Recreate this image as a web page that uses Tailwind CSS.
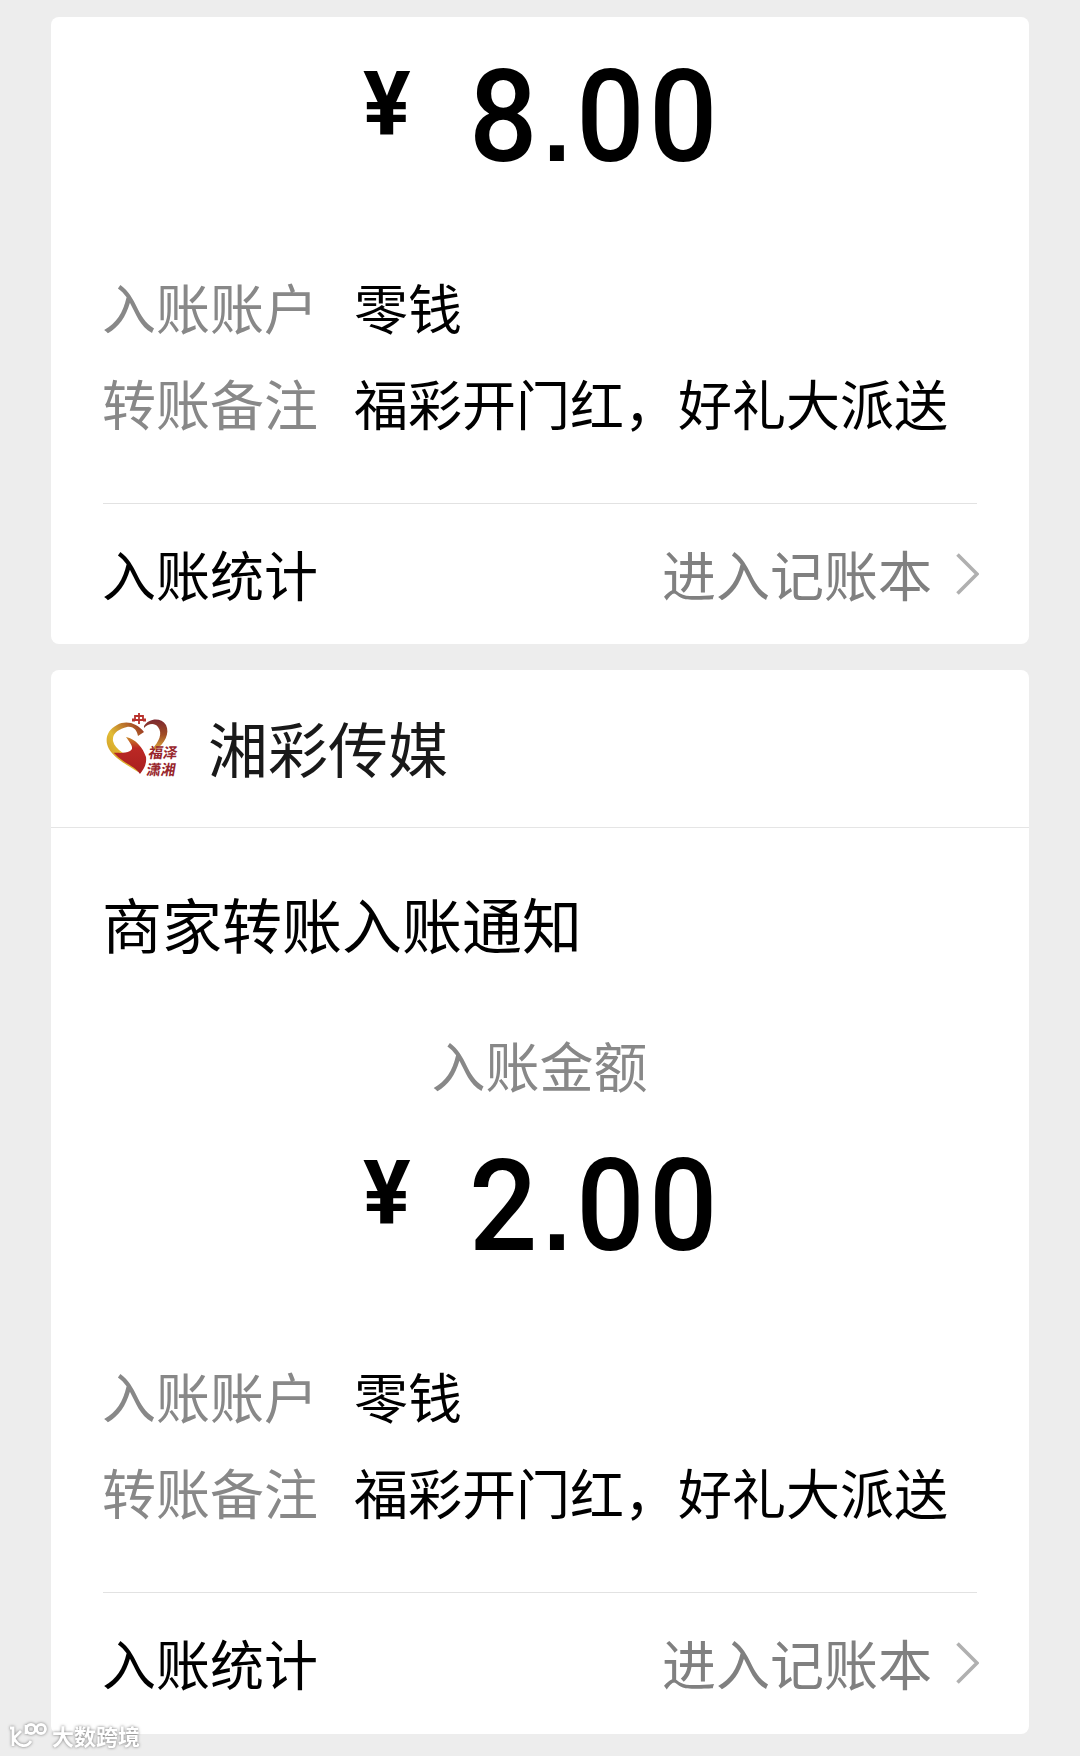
<html lang="zh-CN">
  <head>
    <meta charset="utf-8" />
    <title>入账通知</title>
    <script src="https://cdn.jsdelivr.net/npm/@tailwindcss/browser@4"></script>
  </head>

  <body
    class="relative h-[1756px] overflow-hidden bg-[#ededed] px-[51px] pt-[17px] font-['Noto_Sans_CJK_SC',sans-serif] text-[54px] text-black"
  >
    <div class="flex flex-col gap-[26px]">
      <!-- 8.00 -->
      <section class="h-[627px] w-[978px] rounded-lg bg-white px-[52px] pt-[37px]">
        <div class="flex h-[126px] pl-[260px] font-[Roboto] leading-none">
          <span class="w-[106px] origin-left pt-[5px] text-[89px] font-bold">¥</span>
          <span class="origin-left scale-x-94 text-[128px] leading-[126px] font-medium tracking-[4.7px] whitespace-nowrap"
            >8<span class="inline-block w-[36.7px] text-center font-['Liberation_Sans'] text-[105px] leading-none font-bold">.</span>00</span
          >
        </div>

        <div class="mt-[83px] h-[240px]">
          <div class="flex h-[95px] items-center pb-[8px]">
            <span class="-ml-px w-[252px] text-[#888]">入账账户</span>
            <span>零钱</span>
          </div>
          <div class="flex h-[96px] items-center pb-[8px]">
            <span class="-ml-px w-[252px] text-[#888]">转账备注</span>
            <span class="whitespace-nowrap">福彩开门红，好礼大派送</span>
          </div>
        </div>

        <div class="flex h-[141px] w-[874px] items-center border-t border-[#e2e2e2]">
          <span class="-ml-px pb-[2px]">入账统计</span>
          <span class="mr-[24px] ml-auto pb-[2px] text-[#808080]">进入记账本</span>
          <svg class="-mr-[2px] h-[42px] w-[23px]" viewBox="0 0 23 42" fill="none">
            <path d="M1.5 1.5 21 21 1.5 40.5" stroke="#b0b0b0" stroke-width="3.6" />
          </svg>
        </div>
      </section>

      <!-- 2.00 -->
      <section class="h-[1064px] w-[978px] rounded-lg bg-white">
        <header class="flex h-[158px] items-center border-b border-[#e5e5e5] px-[52px] pb-[3px]">
          <svg class="mb-[3px] h-[80px] w-[80px]" viewBox="0 0 80 80" fill="none">
            <defs>
              <linearGradient id="ring" x1="0" y1="1" x2="1" y2="0">
                <stop offset="0" stop-color="#c98a1c" />
                <stop offset=".45" stop-color="#e2bd35" />
                <stop offset="1" stop-color="#8f2320" />
              </linearGradient>
              <linearGradient id="wing" x1="0" y1="0" x2="0" y2="1">
                <stop offset="0" stop-color="#7c2830" />
                <stop offset=".5" stop-color="#a04c25" />
                <stop offset="1" stop-color="#e0ad3c" />
              </linearGradient>
              <linearGradient id="palm" x1="0" y1="0" x2="0" y2="1">
                <stop offset="0" stop-color="#c98b2a" />
                <stop offset=".3" stop-color="#bb2824" />
                <stop offset="1" stop-color="#a92020" />
              </linearGradient>
            </defs>
            <path
              d="M41 26C34 17 23 14 14 19C4 24 1 34 6 43C12 53 26 60 35 66L33 55C24 49 12 44 10 35C9 27 16 23 24 21C31 20 34 25 35 30Z"
              fill="url(#ring)"
            />
            <path
              d="M41 20C46 12 58 11 63 19C67 27 62 38 52 44L49 43C56 36 60 27 55 21C51 16 45 18 41 22Z"
              fill="url(#wing)"
            />
            <path
              d="M23 31C33 33 40 42 43 51C44 59 40 64 37 68C32 60 20 57 12 48C7 45 20 49 27 45C32 42 27 37 23 31Z"
              fill="url(#palm)"
            />
            <path d="M36 7v11M32 10h8v4h-8z" stroke="#b8322d" stroke-width="1.800" />
            <path d="M29 14h3M40 14h3" stroke="#b8322d" stroke-width="3" />
            <g fill="#98252b" font-family="Noto Sans CJK SC" font-size="14.500" font-weight="700">
              <text x="46" y="52" transform="translate(8 0) skewX(-10)">福泽</text>
              <text x="45" y="69.500" transform="translate(10 0) skewX(-10)">潇湘</text>
            </g>
          </svg>
          <span class="ml-[25px] text-[60px] text-[#191919]">湘彩传媒</span>
        </header>

        <div class="px-[52px] pt-[65px]">
          <h1 class="-ml-px text-[60px] leading-[60px]">商家转账入账通知</h1>
          <p class="mt-[85px] -ml-px text-center leading-[54px] text-[#888]">入账金额</p>

          <div class="mt-[51px] flex h-[126px] pl-[260px] font-[Roboto] leading-none">
            <span class="w-[106px] origin-left pt-[5px] text-[89px] font-bold">¥</span>
            <span class="origin-left scale-x-94 text-[128px] leading-[126px] font-medium tracking-[4.7px] whitespace-nowrap"
              >2<span class="inline-block w-[36.7px] text-center font-['Liberation_Sans'] text-[105px] leading-none font-bold">.</span>00</span
            >
          </div>

          <div class="mt-[83px] h-[240px]">
            <div class="flex h-[95px] items-center pb-[8px]">
              <span class="-ml-px w-[252px] text-[#888]">入账账户</span>
              <span>零钱</span>
            </div>
            <div class="flex h-[96px] items-center pb-[8px]">
              <span class="-ml-px w-[252px] text-[#888]">转账备注</span>
              <span class="whitespace-nowrap">福彩开门红，好礼大派送</span>
            </div>
          </div>

          <div class="flex h-[141px] w-[874px] items-center border-t border-[#e2e2e2]">
            <span class="-ml-px pb-[2px]">入账统计</span>
            <span class="mr-[24px] ml-auto pb-[2px] text-[#808080]">进入记账本</span>
            <svg class="-mr-[2px] h-[42px] w-[23px]" viewBox="0 0 23 42" fill="none">
              <path d="M1.5 1.5 21 21 1.5 40.5" stroke="#b0b0b0" stroke-width="3.6" />
            </svg>
          </div>
        </div>
      </section>
    </div>

    <!-- watermark -->
    <div
      class="absolute bottom-[7px] left-[8px] flex items-center gap-[5px] text-[22px] leading-[28px] font-bold text-white drop-shadow-[0_0_1.5px_#777]"
    >
      <svg class="h-[28px] w-[39px]" viewBox="0 0 39 28" fill="none" stroke="#fff" stroke-width="2.800">
        <path d="M2 7h3v18M13 10 6 17c4 9 13 10 17 3M18 13V4" />
        <circle cx="23" cy="8" r="4.500" />
        <circle cx="33" cy="8" r="4.500" />
      </svg>
      <span>大数跨境</span>
    </div>
  </body>
</html>
